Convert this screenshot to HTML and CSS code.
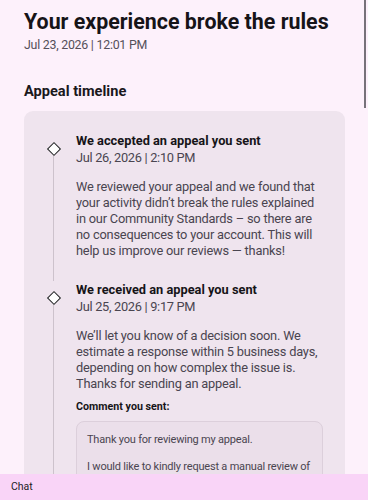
FILE: index.html
```html
<!DOCTYPE html>
<html>
<head>
<meta charset="utf-8">
<link rel="stylesheet" href="styles.css">
</head>
<body>
<div class="page">
  <h1 class="title">Your experience broke the rules</h1>
  <div class="subdate">Jul 23, 2026 | 12:01 PM</div>
  <h2 class="section">Appeal timeline</h2>
  <div class="card">
    <div class="item">
      <div class="rail"><span class="diamond"></span><span class="line"></span></div>
      <div class="body">
        <div class="item-title">We accepted an appeal you sent</div>
        <div class="item-date">Jul 26, 2026 | 2:10 PM</div>
        <p class="text">We reviewed your appeal and we found that your activity didn’t break the rules explained in our Community Standards – so there are no consequences to your account. This will help us improve our reviews — thanks!</p>
      </div>
    </div>
    <div class="item">
      <div class="rail"><span class="diamond"></span><span class="line"></span></div>
      <div class="body">
        <div class="item-title">We received an appeal you sent</div>
        <div class="item-date">Jul 25, 2026 | 9:17 PM</div>
        <p class="text">We’ll let you know of a decision soon. We estimate a response within 5 business days, depending on how complex the issue is. Thanks for sending an appeal.</p>
        <div class="comment-label">Comment you sent:</div>
        <div class="comment">
          <p>Thank you for reviewing my appeal.</p>
          <p>I would like to kindly request a manual review of my account. I believe the decision was made in error.</p>
        </div>
      </div>
    </div>
  </div>
</div>
<div class="chatbar">Chat</div>
<div class="scrollthumb"></div>
</body>
</html>
```
FILE: styles.css
```css
* { box-sizing: border-box; }
html, body { margin: 0; padding: 0; }
body {
  background: #fdf1fb;
  font-family: Roboto, "Noto Sans", sans-serif;
  color: #1c1b1f;
  height: 500px;
  overflow: hidden;
}
.page { padding: 9px 23px 0 24px; }
.title {
  margin: 0;
  font-size: 21.4px;
  line-height: 26px;
  font-weight: 700;
  color: #161418;
  white-space: nowrap;
}
.subdate {
  margin-top: 2px;
  font-size: 12.4px;
  letter-spacing: -0.25px;
  line-height: 16px;
  color: #55505a;
}
.section {
  margin: 29px 0 0;
  font-size: 14.6px;
  line-height: 18px;
  font-weight: 700;
  color: #1a181c;
}
.card {
  margin-top: 11px;
  background: #efe4ee;
  border-radius: 9px;
  padding: 21px 22px 40px 0;
}
.item { display: flex; }
.rail {
  width: 52px;
  flex: none;
  display: flex;
  flex-direction: column;
  align-items: center;
  padding-left: 7px;
}
.diamond {
  margin-top: 12px;
  width: 10px;
  height: 10px;
  border: 1.5px solid #1c1b1f;
  background: #fff;
  transform: rotate(45deg);
  flex: none;
}
.line {
  flex: 1;
  width: 1.5px;
  background: #cdc2cc;
  margin-top: 2px;
}
.body { flex: 1; padding-bottom: 22px; }
.item-title {
  font-size: 12.8px;
  line-height: 18px;
  font-weight: 700;
  color: #161418;
}
.item-date {
  font-size: 12.8px;
  letter-spacing: -0.3px;
  line-height: 16px;
  color: #4a4550;
}
.text {
  margin: 13px 3px 0 0;
  font-size: 12.8px;
  letter-spacing: -0.2px;
  line-height: 16px;
  color: #4a4550;
}
.comment-label {
  margin-top: 8px;
  font-size: 10.7px;
  line-height: 14px;
  font-weight: 700;
  color: #161418;
}
.comment {
  margin-top: 7px;
  background: #ebdfea;
  border: 1px solid #dccfdb;
  border-radius: 8px;
  padding: 10px 10px 10px 10px;
  font-size: 11px;
  letter-spacing: -0.2px;
  line-height: 16px;
  color: #4a4550;
}
.comment p { margin: 0 0 11px; }
.chatbar {
  position: fixed;
  left: 0;
  right: 0;
  bottom: 0;
  height: 26px;
  background: #f9d4f7;
  font-size: 10.5px;
  line-height: 26px;
  padding-left: 11px;
  color: #1c1b1f;
}
.scrollthumb {
  position: fixed;
  top: 0;
  right: 2px;
  width: 2px;
  height: 108px;
  background: #77727a;
}
```
